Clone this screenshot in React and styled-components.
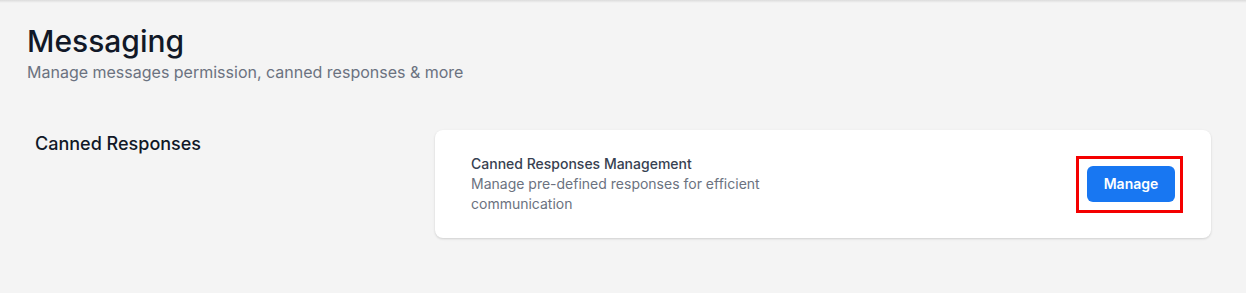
import React from 'react'
import styled, { createGlobalStyle } from 'styled-components'

const GlobalStyle = createGlobalStyle`
  html, body {
    margin: 0;
    padding: 0;
    background: #f4f4f4;
    font-family: Inter, 'Noto Sans', sans-serif;
  }
`

const Page = styled.div`
  min-height: 293px;
  background: linear-gradient(to bottom, rgba(0, 0, 0, 0.1), rgba(0, 0, 0, 0) 3px), #f4f4f4;
  padding: 23px 35px 40px 27px;
  box-sizing: border-box;
`

const Header = styled.div`
  display: flex;
  flex-flow: column;
  gap: 1px;
`

const Title = styled.h1`
  margin: 0;
  font-size: 30px;
  line-height: 36px;
  font-weight: 500;
  color: #111827;
`

const Subtitle = styled.p`
  margin: 0;
  font-size: 16px;
  line-height: 24px;
  color: #6b7280;
`

const Section = styled.div`
  display: grid;
  grid-template-columns: 400px 1fr;
  margin-top: 46px;
  padding-left: 8px;
`

const SectionLabel = styled.h2`
  margin: 0;
  font-size: 18px;
  line-height: 28px;
  font-weight: 500;
  color: #111827;
`

const Card = styled.div`
  display: flex;
  flex-flow: row nowrap;
  align-items: center;
  justify-content: space-between;
  background: #fff;
  border-radius: 8px;
  box-shadow: 0 1px 3px rgba(0, 0, 0, 0.1), 0 1px 2px rgba(0, 0, 0, 0.06);
  padding: 24px 28px 24px 36px;
`

const CardText = styled.div`
  display: flex;
  flex-flow: column;
  max-width: 320px;
  font-size: 14px;
  line-height: 20px;
`

const CardTitle = styled.div`
  font-weight: 500;
  color: #374151;
`

const CardDesc = styled.div`
  color: #6b7280;
`

const Highlight = styled.div`
  border: 3px solid #f40000;
  padding: 7px 5px 8px 8px;
  display: flex;
`

const Button = styled.button`
  width: 88px;
  height: 36px;
  border: 0;
  outline: 0;
  border-radius: 6px;
  background-color: #1877f2;
  color: #fff;
  font-family: Inter, 'Noto Sans', sans-serif;
  font-size: 14px;
  font-weight: 600;
  cursor: pointer;
`

export default function App() {
  return (
    <>
      <GlobalStyle />
      <Page>
        <Header>
          <Title>Messaging</Title>
          <Subtitle>Manage messages permission, canned responses &amp; more</Subtitle>
        </Header>
        <Section>
          <SectionLabel>Canned Responses</SectionLabel>
          <Card>
            <CardText>
              <CardTitle>Canned Responses Management</CardTitle>
              <CardDesc>Manage pre-defined responses for efficient communication</CardDesc>
            </CardText>
            <Highlight>
              <Button>Manage</Button>
            </Highlight>
          </Card>
        </Section>
      </Page>
    </>
  )
}
